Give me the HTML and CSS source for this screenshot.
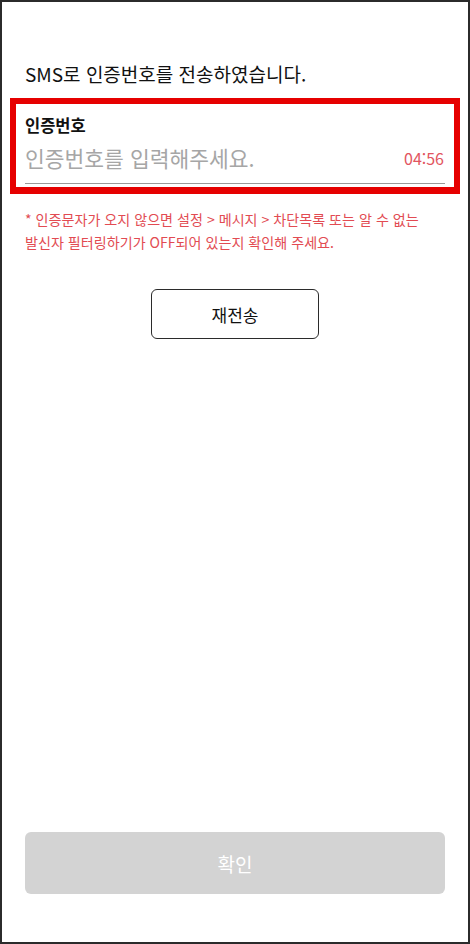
FILE: index.html
```html
<!DOCTYPE html>
<html lang="ko">
<head>
<meta charset="utf-8">
<link rel="stylesheet" href="styles.css">
</head>
<body>
<div class="screen">
  <h1 class="title">SMS로 인증번호를 전송하였습니다.</h1>
  <div class="field-box">
    <div class="label">인증번호</div>
    <div class="input-row">
      <span class="placeholder">인증번호를 입력해주세요.</span>
      <span class="timer">04:56</span>
    </div>
  </div>
  <p class="notice">* 인증문자가 오지 않으면 설정 &gt; 메시지 &gt; 차단목록 또는 알 수 없는<br>발신자 필터링하기가 OFF되어 있는지 확인해 주세요.</p>
  <div class="resend-wrap">
    <button class="resend">재전송</button>
  </div>
  <button class="confirm">확인</button>
</div>
</body>
</html>
```

FILE: styles.css
```css
html, body {
  margin: 0;
  padding: 0;
  background: #fff;
}
body {
  font-family: "Noto Sans CJK KR", "Noto Sans", sans-serif;
  color: #111;
}
.screen {
  width: 470px;
  height: 944px;
  box-sizing: border-box;
  border: 2px solid #2b2b2b;
  display: flex;
  flex-direction: column;
  background: #fff;
}
.title {
  margin: 58px 0 0 23px;
  font-size: 19px;
  font-weight: 400;
  line-height: 28px;
  color: #111;
}
.field-box {
  margin: 10px 8px 0;
  border: 6px solid #e60000;
  border-bottom-width: 7px;
  padding: 10px 9px 3px;
}
.label {
  font-size: 16.5px;
  font-weight: 700;
  line-height: 22px;
  color: #111;
}
.input-row {
  margin-top: 7px;
  display: flex;
  align-items: center;
  justify-content: space-between;
  padding-bottom: 10px;
  border-bottom: 1px solid #9a9a9a;
}
.placeholder {
  font-size: 21.5px;
  line-height: 30px;
  color: #a6a6a6;
}
.timer {
  font-size: 16px;
  line-height: 30px;
  color: #e25560;
  margin-right: 1px;
}
.notice {
  margin: 14px 0 0 23px;
  font-size: 14.1px;
  line-height: 23px;
  color: #e24b52;
}
.resend-wrap {
  margin-top: 35px;
  display: flex;
  justify-content: center;
}
.resend {
  width: 168px;
  height: 50px;
  box-sizing: border-box;
  border: 1.5px solid #2b2b2b;
  border-radius: 6px;
  background: #fff;
  font-family: inherit;
  font-size: 17px;
  color: #111;
  padding: 0;
}
.confirm {
  margin: auto 23px 48px;
  height: 62px;
  border: none;
  border-radius: 6px;
  background: #d3d3d3;
  color: #fff;
  font-family: inherit;
  font-size: 19px;
  padding: 0;
}
```
